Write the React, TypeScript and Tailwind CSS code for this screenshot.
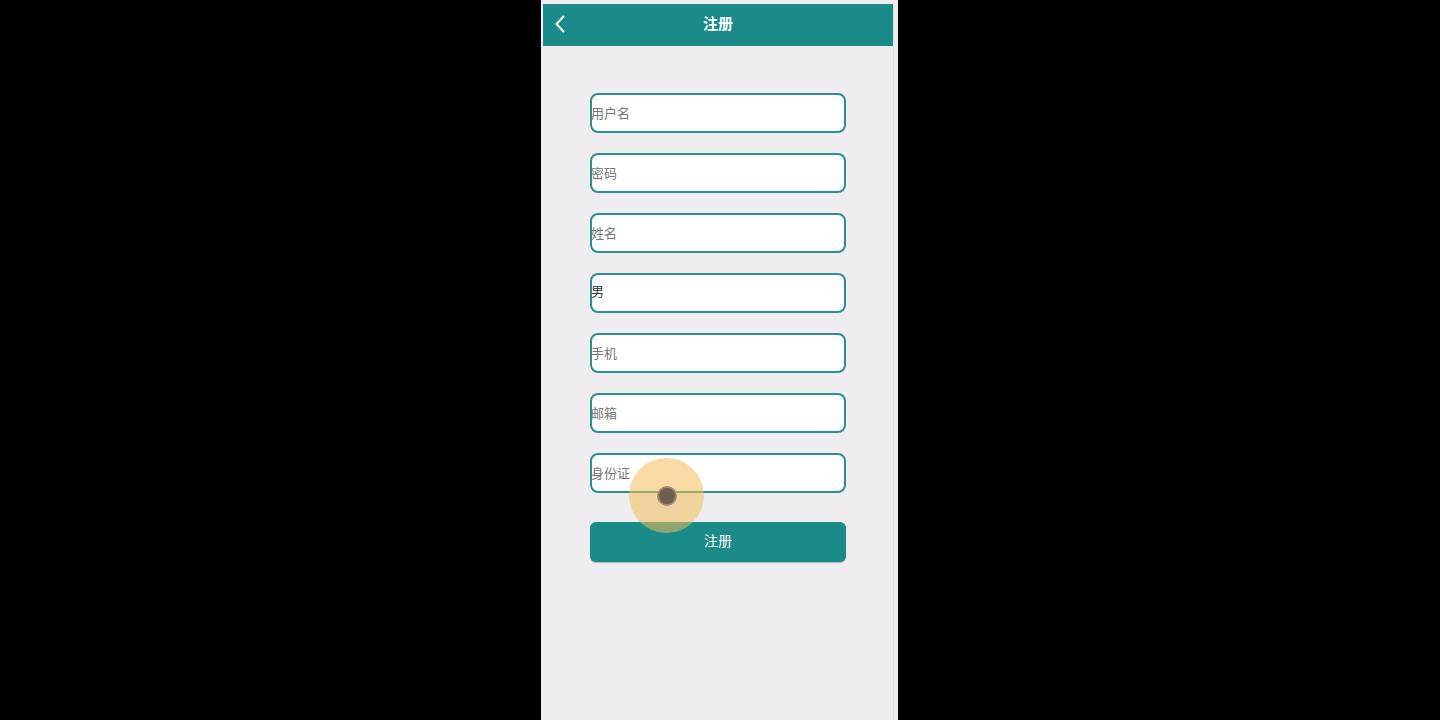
import React from "react";

const fields = ["用户名", "密码", "姓名", "男", "手机", "邮箱", "身份证"];

export default function App() {
  return (
    <div
      className="w-[1440px] h-[720px] bg-black flex justify-center overflow-hidden"
      style={{ fontFamily: '"Noto Sans CJK SC", "Noto Sans", sans-serif' }}
    >
      <div className="w-[357px] h-[720px] mr-[1px] bg-[#efedf0] pt-[4px] pl-[2px] flex flex-col relative">
        <div className="absolute right-[4px] top-0 bottom-0 w-px bg-[#e2e0e4]" />
        <div className="w-[350px] h-[42px] bg-[#1b8b89] flex items-center relative">
          <svg
            className="absolute left-[11px] top-[11px]"
            width="12"
            height="18"
            viewBox="0 0 12 18"
            fill="none"
          >
            <path d="M9.5 1.5 L2.5 9 L9.5 16.5" stroke="#ffffff" strokeWidth="2" strokeLinecap="round" strokeLinejoin="round" />
          </svg>
          <div className="flex-1 text-center text-white text-[15px] font-bold leading-none -mt-[5px]">注册</div>
        </div>
        <div className="w-[350px] flex flex-col items-center pt-[47px] gap-[20px]">
          {fields.map((f) => (
            <div
              key={f}
              className="w-[256px] h-[40px] bg-white border-2 border-[#2b908e] rounded-[8px] flex items-center"
            >
              <span
                className={
                  "text-[13px] leading-none -ml-[1px] " +
                  (f === "男" ? "text-[#333333] -mt-[6px]" : "text-[#777777] -mt-[2px]")
                }
              >
                {f}
              </span>
            </div>
          ))}
          <div className="w-[256px] h-[40px] mt-[9px] bg-[#1b8b89] rounded-[6px] flex items-center justify-center shadow-[0_1px_1px_rgba(0,0,0,0.25)]">
            <span className="text-white text-[14px] leading-none -mt-[4px]">注册</span>
          </div>
        </div>
        <div className="absolute left-[88px] top-[458px] w-[75px] h-[75px] rounded-full bg-[rgba(242,190,90,0.55)] flex items-center justify-center">
          <div className="w-[20px] h-[20px] rounded-full bg-[#6e5e4c] border-2 border-[#9c8a72]" />
        </div>
      </div>
    </div>
  );
}
